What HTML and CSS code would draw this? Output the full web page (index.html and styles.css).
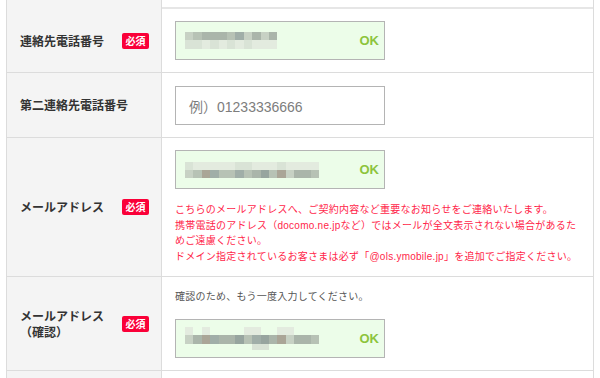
FILE: index.html
```html
<!DOCTYPE html>
<html lang="ja">
<head>
<meta charset="utf-8">
<title>お客さま情報入力</title>
<link rel="stylesheet" href="styles.css">
</head>
<body>
<div class="form">
  <div class="row row-top"><div class="th"></div><div class="td"></div></div>

  <div class="row">
    <div class="th"><span class="label">連絡先電話番号</span><span class="badge">必須</span></div>
    <div class="td">
      <div class="field ok">
        <div class="mosaic">
          <div class="mrow"><i class="c"></i><i class="d"></i><i class="e"></i><i class="e"></i><i class="e"></i><i class="d"></i><i class="f"></i><i class="c"></i><i class="e"></i><i class="c"></i><i class="e"></i></div>
          <div class="mrow tall"><i class="b"></i><i class="b"></i><i class="a"></i><i class="b"></i><i class="a"></i><i class="b"></i><i class="a"></i><i class="b"></i><i class="a"></i><i class="a"></i><i class="a"></i></div>
        </div>
        <span class="ok-text">OK</span>
      </div>
    </div>
  </div>

  <div class="row">
    <div class="th"><span class="label">第二連絡先電話番号</span></div>
    <div class="td td-13">
      <div class="field empty"><span class="placeholder">例）01233336666</span></div>
    </div>
  </div>

  <div class="row">
    <div class="th"><span class="label">メールアドレス</span><span class="badge">必須</span></div>
    <div class="td">
      <div class="field ok">
        <div class="mosaic">
          <div class="mrow"><i class="b"></i><i class="a"></i><i class="a"></i><i class="a"></i><i class="a"></i><i class="a"></i><i class="b"></i><i class="b"></i><i class="a"></i><i class="a"></i><i class="a"></i><i class="b"></i><i class="a"></i><i class="a"></i><i class="a"></i><i class="a"></i></div>
          <div class="mrow"><i class="c"></i><i class="d"></i><i class="g"></i><i class="f"></i><i class="d"></i><i class="d"></i><i class="f"></i><i class="d"></i><i class="e"></i><i class="h"></i><i class="d"></i><i class="g"></i><i class="c"></i><i class="e"></i><i class="e"></i><i class="d"></i></div>
        </div>
        <span class="ok-text">OK</span>
      </div>
      <p class="note">こちらのメールアドレスへ、ご契約内容など重要なお知らせをご連絡いたします。<br>携帯電話のアドレス（docomo.ne.jpなど）ではメールが全文表示されない場合があるためご遠慮ください。<br>ドメイン指定されているお客さまは必ず「@ols.ymobile.jp」を追加でご指定ください。</p>
    </div>
  </div>

  <div class="row">
    <div class="th"><span class="label">メールアドレス<br>（確認）</span><span class="badge">必須</span></div>
    <div class="td">
      <p class="hint">確認のため、もう一度入力してください。</p>
      <div class="field ok">
        <div class="mosaic">
          <div class="mrow"><i class="a"></i><i class="t"></i><i class="a"></i><i class="t"></i><i class="t"></i><i class="t"></i><i class="t"></i><i class="a"></i><i class="a"></i><i class="t"></i><i class="t"></i><i class="a"></i><i class="a"></i><i class="t"></i><i class="t"></i><i class="t"></i></div>
          <div class="mrow tall"><i class="c"></i><i class="e"></i><i class="g"></i><i class="f"></i><i class="e"></i><i class="e"></i><i class="h"></i><i class="d"></i><i class="f"></i><i class="h"></i><i class="e"></i><i class="g"></i><i class="c"></i><i class="e"></i><i class="e"></i><i class="d"></i></div>
          <div class="mrow short"><i class="t"></i><i class="t"></i><i class="t"></i><i class="t"></i><i class="t"></i><i class="t"></i><i class="t"></i><i class="t"></i><i class="b"></i><i class="b"></i><i class="t"></i><i class="t"></i><i class="t"></i><i class="t"></i><i class="t"></i><i class="t"></i></div>
        </div>
        <span class="ok-text">OK</span>
      </div>
    </div>
  </div>

  <div class="row row-bottom"><div class="th"></div><div class="td"></div></div>
</div>
</body>
</html>
```

FILE: styles.css
```css
* { box-sizing: border-box; }

html, body {
  margin: 0;
  padding: 0;
  background: #fff;
  width: 600px;
  height: 378px;
  overflow: hidden;
  font-family: "Liberation Sans", "Noto Sans CJK JP", sans-serif;
  color: #333;
}

.form {
  margin-left: 6px;
  width: 588px;
  border-left: 1px solid #dcdcdc;
  border-right: 1px solid #dcdcdc;
}

.row {
  display: grid;
  grid-template-columns: 155px 1fr;
  border-bottom: 1px solid #dcdcdc;
}

.row-top {
  height: 9px;
  border-bottom: 2px solid #e6e6e6;
}

.row-bottom {
  height: 20px;
  border-bottom: 0;
}

.th {
  background: #f4f4f4;
  border-right: 1px solid #dcdcdc;
  display: flex;
  align-items: center;
  justify-content: space-between;
  padding: 0 12px 0 13px;
}

.label {
  font-family: "Noto Sans CJK JP", sans-serif;
  font-weight: bold;
  font-size: 12px;
  line-height: 15.5px;
  color: #333;
}

.badge {
  display: inline-flex;
  align-items: center;
  justify-content: center;
  width: 27px;
  height: 16px;
  border-radius: 2px;
  background: #fa0038;
  color: #fff;
  font-family: "Noto Sans CJK JP", sans-serif;
  font-size: 10px;
  line-height: 1;
  font-weight: bold;
}

.td {
  padding: 12px 13px;
}

.td-13 {
  padding-top: 13px;
}

.field {
  width: 210px;
  height: 39px;
  border: 1px solid #b4b4b4;
  display: flex;
  align-items: center;
  justify-content: space-between;
}

.field.ok {
  background: #ecfde9;
  padding: 0 5px 0 9px;
}

.field.empty {
  background: #fff;
  padding: 0 13px;
}

.placeholder {
  font-size: 14px;
  color: #7d7d7d;
}

.ok-text {
  font-family: "Liberation Sans", sans-serif;
  font-weight: bold;
  font-size: 13px;
  color: #8cc43c;
}

.mosaic {
  display: flex;
  flex-direction: column;
}

.mrow {
  display: flex;
  height: 8px;
}

.mrow.tall { height: 9px; }
.mrow.short { height: 6px; }

.mrow i {
  display: block;
  width: 8.4px;
  height: 100%;
}

.mrow .t { background: transparent; }
.mrow .a { background: #e3ebdf; }
.mrow .b { background: #d9e3d6; }
.mrow .c { background: #c7d1c4; }
.mrow .d { background: #b7c2b5; }
.mrow .e { background: #aab5aa; }
.mrow .f { background: #a0aea8; }
.mrow .g { background: #aaa597; }
.mrow .h { background: #97a59f; }

.note {
  margin: 13px 0 0;
  font-size: 10px;
  line-height: 15.6px;
  letter-spacing: 0.25px;
  color: #ff1f4a;
}

.hint {
  margin: 0 0 14px;
  font-size: 10px;
  line-height: 16px;
  letter-spacing: 0.25px;
  color: #555;
}
```
